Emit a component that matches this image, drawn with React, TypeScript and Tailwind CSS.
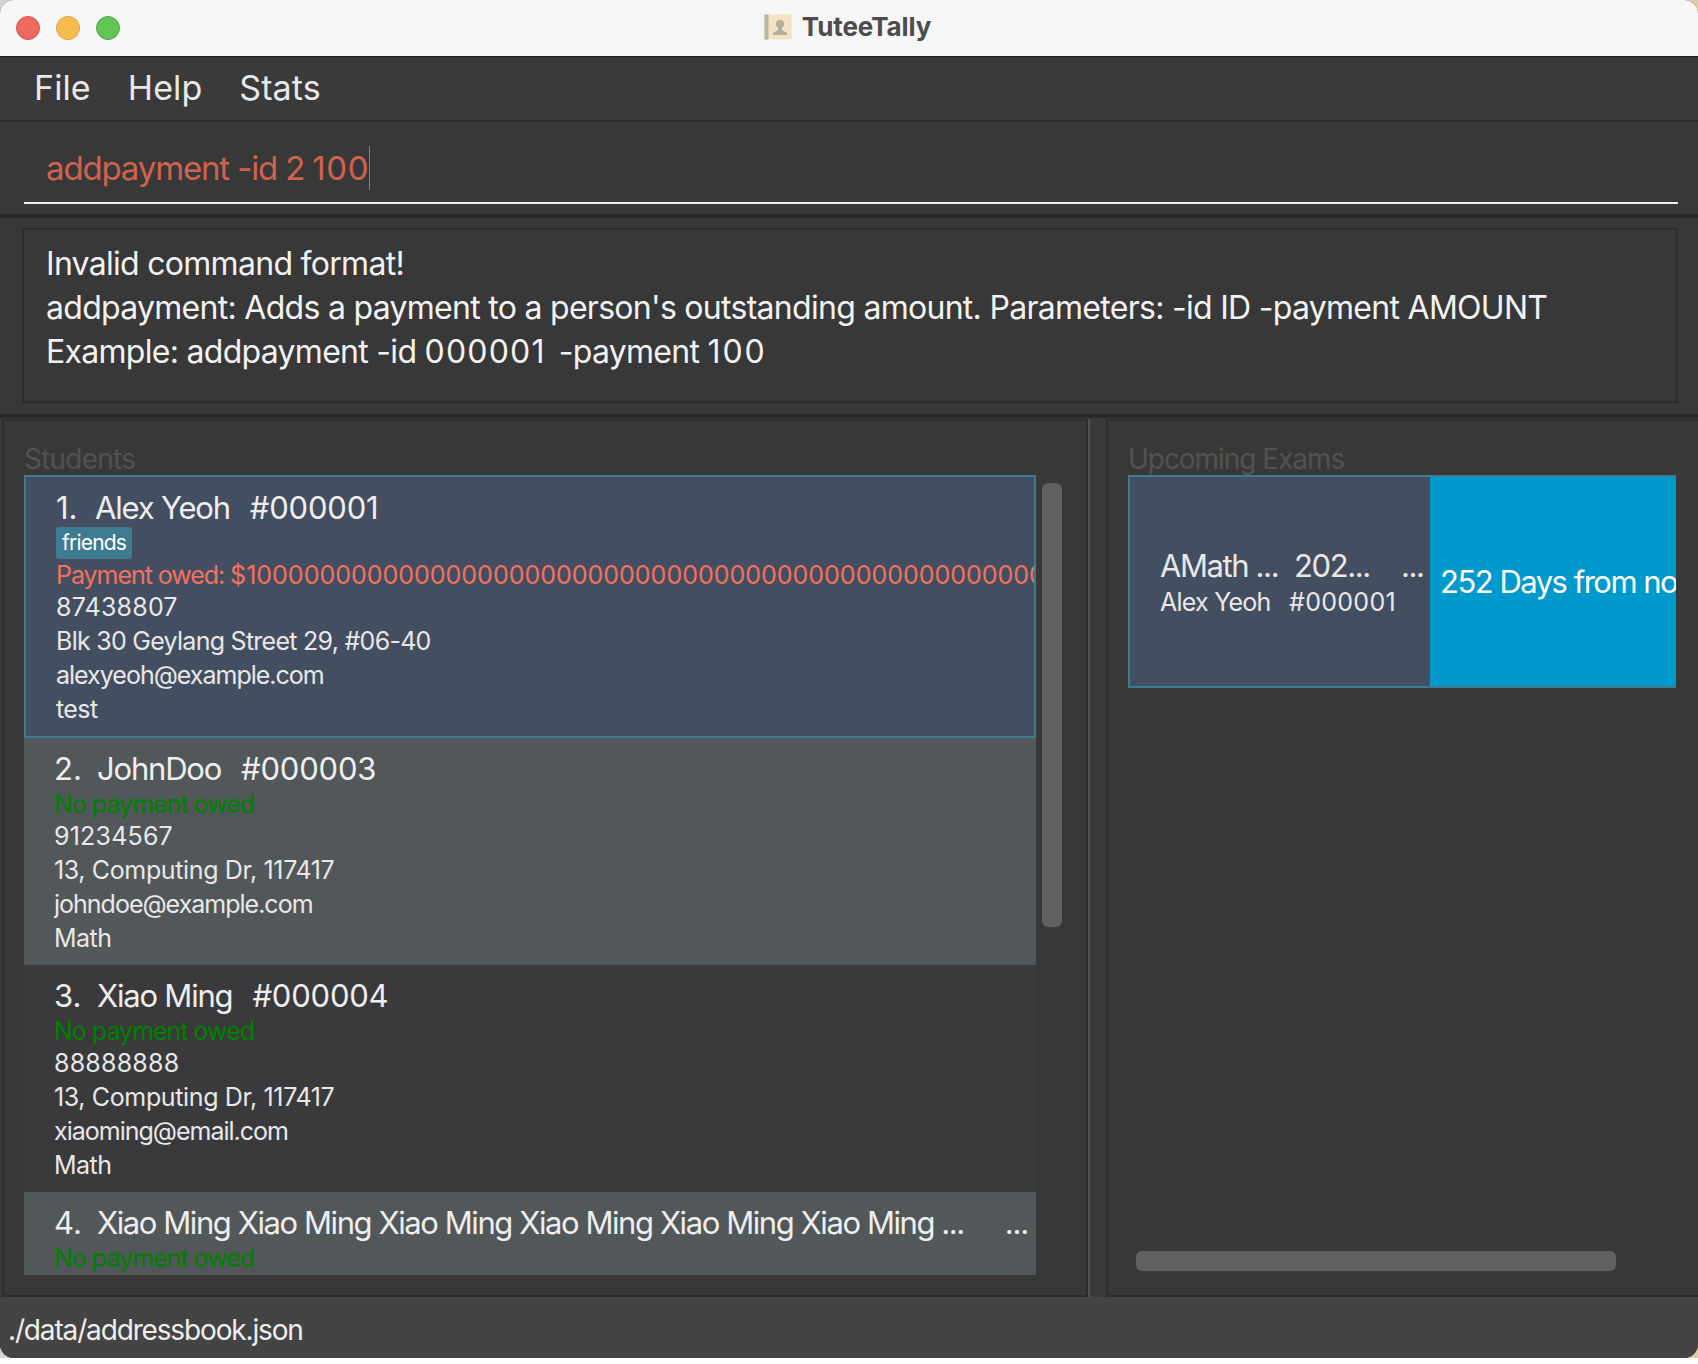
import React from 'react';

const Line: React.FC<{ size?: string; tracking?: string; className?: string; children: React.ReactNode }> = ({
  size = 'h-[34px] leading-[34px]',
  tracking = 'tracking-[-1px]',
  className = '',
  children,
}) => <div className={`text-[25px] whitespace-pre overflow-hidden ${size} ${tracking} ${className}`}>{children}</div>;

const Name: React.FC<{ tracking?: string; children: React.ReactNode }> = ({ tracking = 'tracking-[-1.2px]', children }) => (
  <div className={`h-[38px] leading-[38px] text-[31px] text-[#eeeeee] whitespace-pre ${tracking}`}>{children}</div>
);

const Num: React.FC<{ children: React.ReactNode }> = ({ children }) => (
  <span className="inline-block w-[43px] tracking-[0px]">{children}</span>
);

const Id: React.FC<{ children: React.ReactNode }> = ({ children }) => (
  <span className="ml-[20px] tracking-[-0.2px]">{children}</span>
);

const StudentRow: React.FC<{ bg: string; num: string; name: string; id: string; phone: string; email: string; subject: string }> = ({
  bg, num, name, id, phone, email, subject,
}) => (
  <div className={`h-[227px] shrink-0 pt-[12px] pl-[30px] text-[#e8e8e8] ${bg}`}>
    <Name><Num>{num}</Num>{name}<Id>{id}</Id></Name>
    <Line size="h-[31px] leading-[32px]" className="text-[#008000]">No payment owed</Line>
    <Line tracking="tracking-[0.2px]">{phone}</Line>
    <Line tracking="tracking-[-0.36px]">13, Computing Dr, 117417</Line>
    <Line>{email}</Line>
    <Line tracking="tracking-[-0.5px]">{subject}</Line>
  </div>
);

const App: React.FC = () => {
  return (
    <div className="w-[1698px] h-[1364px] overflow-hidden flex flex-col bg-[linear-gradient(90deg,#d4d4d4_50%,#d9cda8_50%)] font-[Inter,sans-serif]">
      <div className="h-[1358px] shrink-0 rounded-[14px] overflow-hidden flex flex-col bg-[#383838]">
        {/* Title bar */}
        <div className="h-[57px] shrink-0 relative flex items-center justify-center pb-[3px] bg-[#f6f6f6] border-b border-[#1f1f1f]">
          <div className="absolute left-[16px] top-[16px] flex gap-[16px]">
            <span className="w-[24px] h-[24px] rounded-full bg-[#ee6a5f] border border-[#d8554b]"></span>
            <span className="w-[24px] h-[24px] rounded-full bg-[#f5bd4f] border border-[#d9a03c]"></span>
            <span className="w-[24px] h-[24px] rounded-full bg-[#61c454] border border-[#4fa845]"></span>
          </div>
          <div className="flex items-center gap-[10px] ml-[-3px]">
            <svg width="28" height="26" viewBox="0 0 28 26">
              <rect x="0.5" y="0.5" width="27" height="25" rx="1.5" fill="#f1e3c3" />
              <rect x="0.5" y="0.5" width="4" height="25" fill="#b9b4a8" />
              <circle cx="16" cy="10" r="4" fill="#b5ad9b" />
              <path d="M14.5 13 L17.5 13 L18 16 L23 19 L23 21 L9 21 L9 19 L14 16 Z" fill="#b5ad9b" />
            </svg>
            <span className="text-[26px] font-bold text-[#4c4c4c] tracking-[-0.1px]">TuteeTally</span>
          </div>
        </div>

        {/* Menu */}
        <div className="h-[65px] shrink-0 flex items-center gap-[37px] pl-[34px] pb-[3px] bg-[#3a3a3a] border-b-2 border-[#2c2c2c] text-[34px] tracking-[0.1px] text-[#e8e8e8]">
          <span>File</span>
          <span>Help</span>
          <span>Stats</span>
        </div>

        {/* Command box */}
        <div className="h-[92px] shrink-0 pl-[24px] pr-[20px] pt-[24px]">
          <div className="h-[58px] border-b-2 border-[#f2f2f2] pl-[22px]">
            <div className="flex items-start">
              <span className="h-[44px] leading-[44px] text-[33px] tracking-[-1.15px] text-[#cf6350] whitespace-pre">
                addpayment -id 2 <span className="tracking-[0.6px]">100</span>
              </span>
              <span className="w-px h-[44px] bg-[#cf6350]"></span>
            </div>
          </div>
        </div>

        <div className="h-[4px] shrink-0 bg-[#2a2a2a]"></div>

        {/* Result */}
        <div className="h-[196px] shrink-0 px-[20px] pt-[10px] pb-[11px] bg-[#383838]">
          <div className="h-full ml-[2px] border-2 border-[#2d2d2d] pl-[22px] pt-[12px] text-[32px] leading-[44px] tracking-[-0.71px] text-[#f2f2f2] whitespace-pre">
            <div>Invalid command format!</div>
            <div>addpayment: Adds a payment to a person's outstanding amount. Parameters: -id ID -payment AMOUNT</div>
            <div>
              Example: addpayment -id <span className="tracking-[1.2px]">000001</span>
              <span className="ml-[13px]">-payment </span>
              <span className="tracking-[1.9px]">100</span>
            </div>
          </div>
        </div>

        <div className="h-[4px] shrink-0 bg-[#2a2a2a]"></div>

        {/* Panels */}
        <div className="h-[879px] shrink-0 flex pl-[2px] pt-[1px] bg-[#3a3a3a]">
          <div className="w-[1086px] h-[878px] border-2 border-[#2d2d2d] bg-[#383838] pl-[20px] flex flex-col">
            <div className="h-[54px] shrink-0 pt-[19px] text-[28px] leading-[38px] tracking-[-0.77px] text-[#525252]">Students</div>
            <div className="flex gap-[6px]">
              <div className="w-[1012px] h-[800px] overflow-hidden flex flex-col">
                <div className="h-[263px] shrink-0 border-2 border-[#3e7b91] bg-[#434f60] pt-[12px] pl-[30px] overflow-hidden text-[#e8e8e8]">
                  <Name><span className="inline-block w-[39px] tracking-[0px]">1.</span>Alex Yeoh<Id>#000001</Id></Name>
                  <div className="h-[32px]">
                    <span className="inline-block h-[32px] leading-[31px] px-[6px] rounded-[3px] bg-[#3e7b91] text-[21px] tracking-[-0.8px] text-white">friends</span>
                  </div>
                  <Line size="h-[31px] leading-[32px]" tracking="tracking-[-1.05px]" className="text-[#f6705f]">
                    Payment owed: <span className="tracking-[0px]">$1000000000000000000000000000000000000000000000000000000000000000000000000</span>
                  </Line>
                  <Line tracking="tracking-[0.2px]">87438807</Line>
                  <Line tracking="tracking-[-0.73px]">Blk 30 Geylang Street 29, #06-40</Line>
                  <Line>alexyeoh@example.com</Line>
                  <Line tracking="tracking-[-0.6px]">test</Line>
                </div>
                <StudentRow bg="bg-[#525759]" num="2." name="JohnDoo" id="#000003" phone="91234567" email="johndoe@example.com" subject="Math" />
                <StudentRow bg="bg-[#3a3a3c]" num="3." name="Xiao Ming" id="#000004" phone="88888888" email="xiaoming@email.com" subject="Math" />
                <div className="h-[83px] shrink-0 pt-[12px] pl-[30px] pr-[8px] bg-[#525759] text-[#e8e8e8]">
                  <div className="flex justify-between">
                    <Name tracking="tracking-[-1.42px]"><Num>4.</Num>Xiao Ming Xiao Ming Xiao Ming Xiao Ming Xiao Ming Xiao Ming ...</Name>
                    <Name>...</Name>
                  </div>
                  <Line size="h-[31px] leading-[32px]" className="text-[#008000]">No payment owed</Line>
                </div>
              </div>
              <div className="w-[20px] h-[444px] mt-[8px] rounded-[6px] bg-[#606060]"></div>
            </div>
          </div>
          <div className="w-[18px] shrink-0 flex">
            <div className="w-[2px] h-full bg-[#505050]"></div>
          </div>
          <div className="flex-1 h-[878px] border-2 border-r-0 border-[#2d2d2d] bg-[#383838] pl-[20px] flex flex-col">
            <div className="h-[54px] shrink-0 pt-[19px] text-[28px] leading-[38px] tracking-[-1.05px] text-[#525252] whitespace-pre">Upcoming Exams</div>
            <div className="w-[548px] h-[213px] shrink-0 flex border-y-2 border-l-2 border-[#3e7b91] overflow-hidden">
              <div className="w-[300px] shrink-0 bg-[#434f60] pl-[30px] pt-[70px] text-[#e8e8e8]">
                <div className="h-[38px] leading-[38px] text-[31px] tracking-[-1.4px] flex whitespace-pre">
                  <span className="w-[134px]">AMath ...</span>
                  <span className="w-[107px]">202...</span>
                  <span>...</span>
                </div>
                <div className="h-[34px] leading-[34px] text-[25px] flex whitespace-pre">
                  <span className="w-[129px] tracking-[-0.75px]">Alex Yeoh</span>
                  <span className="tracking-[0.3px]">#000001</span>
                </div>
              </div>
              <div className="flex-1 min-w-0 bg-[#0099cc] pl-[10px] pt-[2px] flex items-center overflow-hidden">
                <span className="text-[31px] tracking-[-1.5px] text-white whitespace-pre">252 Days from now</span>
              </div>
            </div>
            <div className="flex-1"></div>
            <div className="w-[480px] h-[20px] shrink-0 ml-[8px] mb-[24px] rounded-[6px] bg-[#606060]"></div>
          </div>
        </div>

        {/* Status bar */}
        <div className="flex-1 flex items-center pl-[8px] pt-[5px] bg-[#444444] text-[28px] tracking-[-1.15px] text-[#eeeeee]">./data/addressbook.json</div>
      </div>
      <div className="flex-1 bg-white"></div>
    </div>
  );
};

export default App;
